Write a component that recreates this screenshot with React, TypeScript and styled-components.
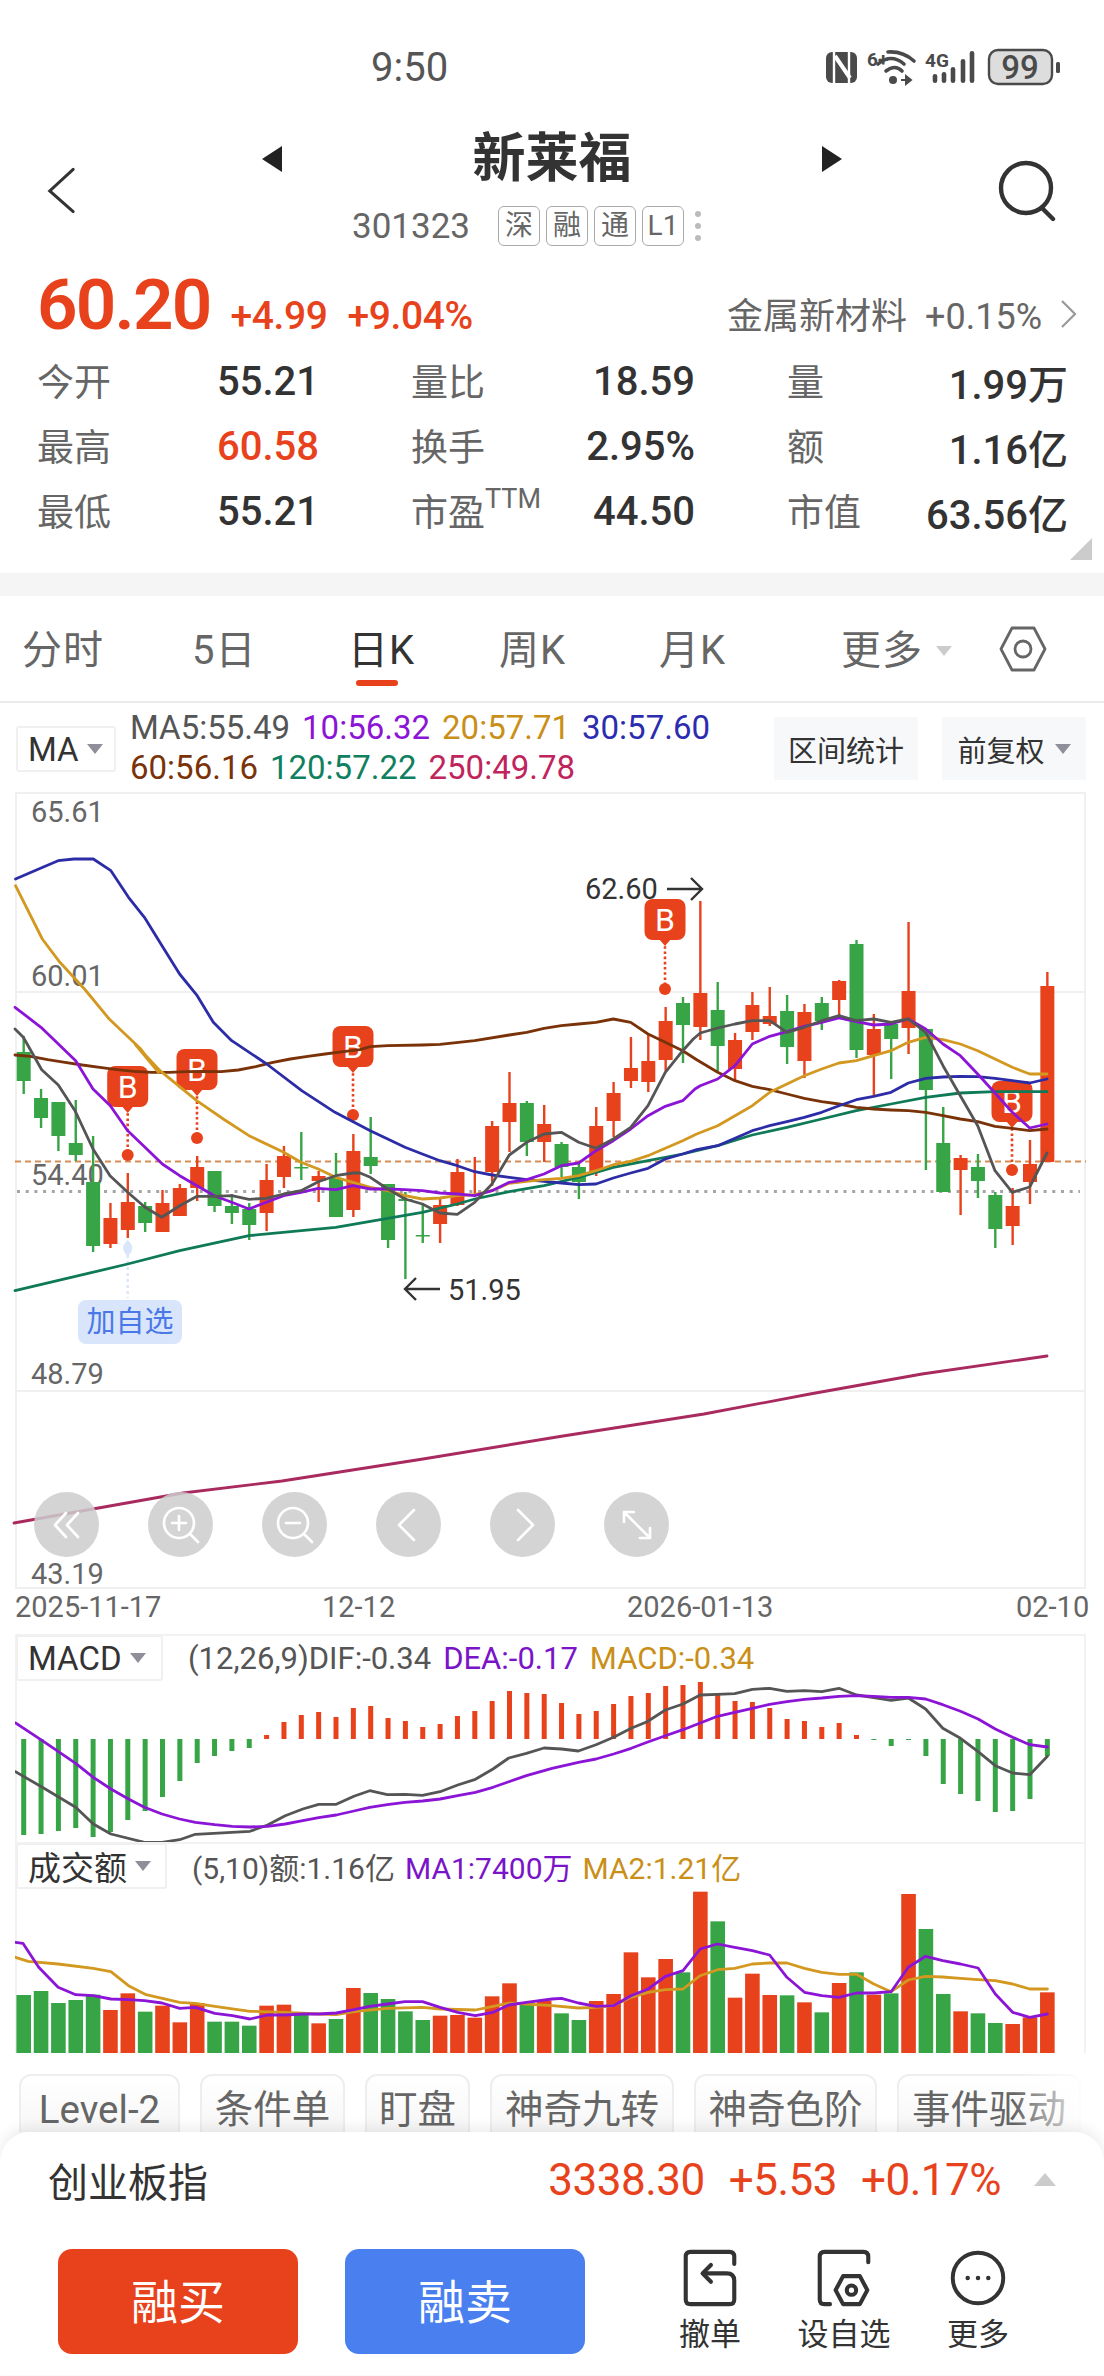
import styled, { createGlobalStyle } from "styled-components";

const RED = "#e8421c";
const GREEN = "#37a546";
const FONT = `Roboto, "Noto Sans CJK SC", sans-serif`;

const GlobalStyle = createGlobalStyle`
  html, body { margin: 0; padding: 0; background: #fff; }
  * { box-sizing: border-box; }
  body { font-family: ${FONT}; color: #333; overflow: hidden; }
`;

const Page = styled.div`
  width: 1104px;
  height: 2376px;
  overflow: hidden;
  background: #fff;
`;

/* ---------- top ---------- */
const StatusBar = styled.div`
  height: 126px;
  padding-top: 48px;
  display: flex;
  align-items: flex-start;
`;
const Clock = styled.div`
  width: 826px;
  padding-left: 371px;
  font-size: 40px;
  line-height: 40px;
  color: #555;
`;
const Nav = styled.div`
  height: 136px;
  display: grid;
  grid-template-columns: 260px 1fr 260px;
`;
const NavIcon = styled.div<{ $right?: boolean }>`
  display: flex;
  justify-content: ${(p) => (p.$right ? "flex-end" : "flex-start")};
  padding: ${(p) => (p.$right ? "34px 46px 0 0" : "39px 0 0 46px")};
`;
const NavCenter = styled.div`
  display: flex;
  flex-direction: column;
`;
const TitleRow = styled.div`
  height: 66px;
  display: flex;
  align-items: center;
  justify-content: space-between;
`;
const Title = styled.div`
  font-size: 53px;
  font-weight: 700;
  line-height: 66px;
  color: #333;
`;
const CodeRow = styled.div`
  margin-top: 14px;
  height: 40px;
  padding-left: 92px;
  display: flex;
  align-items: center;
`;
const Code = styled.div`
  width: 146px;
  font-size: 35px;
  color: #666;
`;
const Tag = styled.span`
  width: 42px;
  height: 40px;
  margin-right: 6px;
  border: 1.5px solid #aaa;
  border-radius: 6px;
  font-size: 28px;
  line-height: 37px;
  text-align: center;
  color: #666;
`;
const MoreDots = styled.span`
  margin-left: 5px;
  display: flex;
  flex-direction: column;
  gap: 6px;
  i {
    display: block;
    width: 6px;
    height: 6px;
    border-radius: 3px;
    background: #bbb;
  }
`;
const QuoteRow = styled.div`
  height: 86px;
  padding: 0 26px 0 37px;
  display: flex;
  align-items: baseline;
`;
const BigPrice = styled.div`
  font-size: 71px;
  font-weight: 600;
  line-height: 86px;
  letter-spacing: -1.8px;
  color: ${RED};
`;
const Change = styled.div`
  margin-left: 20px;
  font-size: 39px;
  font-weight: 500;
  letter-spacing: -0.4px;
  color: ${RED};
`;
const Sector = styled.div`
  margin-left: auto;
  display: flex;
  align-items: baseline;
  gap: 18px;
  font-size: 36px;
  color: #666;
`;
const StatGrid = styled.div`
  position: relative;
  height: 225px;
  padding-left: 37px;
  display: grid;
  grid-template-columns: 282px 284px 281px;
  grid-auto-rows: 65px;
  column-gap: 92px;
`;
const Stat = styled.div`
  display: flex;
  justify-content: space-between;
  align-items: center;
`;
const StatLabel = styled.span`
  margin-top: -2px;
  font-size: 37px;
  color: #666;
  sup {
    font-size: 27px;
    line-height: 0;
    vertical-align: 18px;
    font-family: ${FONT};
  }
`;
const StatValue = styled.span<{ $up?: boolean }>`
  margin-top: 2px;
  font-size: 40px;
  font-weight: 500;
  color: ${(p) => (p.$up ? RED : "#333")};
`;
const Corner = styled.div`
  position: absolute;
  right: 12px;
  bottom: 13px;
  width: 0;
  height: 0;
  border-left: 22px solid transparent;
  border-bottom: 22px solid #ccc;
`;
const Band = styled.div`
  height: 23px;
  background: #f5f5f5;
`;

/* ---------- tabs ---------- */
const Tabs = styled.div`
  height: 107px;
  padding: 0 0 0 22px;
  display: grid;
  grid-template-columns: 170px 156px 151px 160px 182px 158px 60px;
  align-items: center;
  border-bottom: 2px solid #ebebeb;
`;
const Tab = styled.div<{ $on?: boolean }>`
  position: relative;
  display: flex;
  align-items: center;
  gap: 13px;
  padding-top: 3px;
  font-size: 40px;
  letter-spacing: 1px;
  line-height: 100px;
  height: 106px;
  color: ${(p) => (p.$on ? "#333" : "#666")};
  ${(p) =>
    p.$on &&
    `&::after {
      content: "";
      position: absolute;
      left: 8px;
      bottom: 16px;
      width: 42px;
      height: 6px;
      border-radius: 3px;
      background: ${RED};
    }`}
`;
const Caret = styled.span<{ $tone?: string; $size?: number }>`
  display: inline-block;
  width: 0;
  height: 0;
  border-left: ${(p) => p.$size ?? 8}px solid transparent;
  border-right: ${(p) => p.$size ?? 8}px solid transparent;
  border-top: ${(p) => (p.$size ?? 8) + 2}px solid ${(p) => p.$tone ?? "#8f8f99"};
`;

/* ---------- chart header ---------- */
const Toolbar = styled.div`
  height: 89px;
  padding: 0 18px 0 16px;
  display: flex;
`;
const Select = styled.div<{ $w: number }>`
  width: ${(p) => p.$w}px;
  height: 46px;
  border: 2px solid #f0f0f0;
  border-radius: 3px;
  padding-left: 10px;
  display: flex;
  align-items: center;
  gap: 8px;
  font-size: 33px;
  color: #333;
  flex-shrink: 0;
`;
const MaSelect = styled(Select)`
  margin-top: 23px;
`;
const Legend = styled.div`
  margin: 5px 0 0 14px;
  font-size: 33px;
  line-height: 40px;
  white-space: nowrap;
`;
const LegendRow = styled.div`
  display: flex;
  gap: 12px;
`;
const Val = styled.span<{ $c: string }>`
  color: ${(p) => p.$c};
`;
const ToolBtn = styled.div<{ $first?: boolean }>`
  margin: 14px 0 0 ${(p) => (p.$first ? "auto" : "24px")};
  width: 144px;
  height: 63px;
  background: #f7f8fa;
  display: flex;
  align-items: center;
  justify-content: center;
  gap: 10px;
  font-size: 29px;
  color: #333;
`;

/* ---------- main chart ---------- */
const ChartFrame = styled.div`
  position: relative;
  margin-left: 15px;
  width: 1071px;
  height: 797px;
  border: 2px solid #f0f0f0;
`;
const FillSvg = styled.svg`
  position: absolute;
  left: -2px;
  top: -2px;
  overflow: visible;
`;
const AxisText = styled.text`
  font-family: ${FONT};
  font-size: 29px;
  fill: #666;
`;
const MarkText = styled.text`
  font-family: ${FONT};
  font-size: 29px;
  fill: #333;
`;
const BadgeText = styled.text`
  font-family: ${FONT};
  font-size: 32px;
  fill: #fff;
  text-anchor: middle;
`;
const AddWatch = styled.div`
  position: absolute;
  left: 61px;
  top: 506px;
  width: 104px;
  height: 44px;
  border-radius: 8px;
  background: #d9e5fb;
  color: #4a78e6;
  font-size: 29px;
  line-height: 44px;
  text-align: center;
`;
const Controls = styled.div`
  position: absolute;
  left: 17px;
  top: 698px;
  display: flex;
  gap: 49px;
`;
const Round = styled.div`
  width: 65px;
  height: 65px;
  border-radius: 50%;
  background: rgba(205, 205, 205, 0.85);
  display: flex;
  align-items: center;
  justify-content: center;
`;
const Dates = styled.div`
  height: 45px;
  padding-left: 15px;
  display: grid;
  grid-template-columns: 307px 305px 389px 80px;
  font-size: 29px;
  line-height: 36px;
  color: #666;
  white-space: nowrap;
`;

/* ---------- sub panels ---------- */
const Panel = styled.div<{ $h: number }>`
  margin-left: 15px;
  width: 1071px;
  height: ${(p) => p.$h}px;
  border: solid #f2f2f2;
  border-width: 2px 2px 0 2px;
  svg {
    display: block;
    margin-left: -2px;
  }
`;
const PanelHead = styled.div`
  height: 44px;
  display: flex;
  align-items: center;
  margin-left: -1px;
`;
const PanelLegend = styled.div<{ $left: number; $size: number; $gap: number }>`
  margin-left: ${(p) => p.$left}px;
  display: flex;
  gap: ${(p) => p.$gap}px;
  font-size: ${(p) => p.$size}px;
  white-space: nowrap;
  color: #555;
`;

/* ---------- chips ---------- */
const ChipRow = styled.div`
  margin-top: 21px;
  height: 58px;
  padding-left: 19px;
  display: flex;
  gap: 20px;
  overflow: hidden;
  position: relative;
  &::after {
    content: "";
    position: absolute;
    right: 0;
    top: 0;
    width: 90px;
    height: 100%;
    background: linear-gradient(to right, rgba(255, 255, 255, 0), #fff 90%);
  }
`;
const Chip = styled.div<{ $w: number }>`
  flex: 0 0 ${(p) => p.$w}px;
  height: 84px;
  border: 2px solid #eee;
  border-radius: 12px;
  background: linear-gradient(#fff, #f3f3f3);
  font-size: 38.5px;
  line-height: 68px;
  text-align: center;
  color: #666;
  white-space: nowrap;
`;

/* ---------- bottom sheet ---------- */
const Sheet = styled.div`
  position: relative;
  height: 243px;
  border-radius: 30px 30px 0 0;
  background: #fff;
  box-shadow: 0 -4px 14px rgba(0, 0, 0, 0.08);
`;
const IndexRow = styled.div`
  height: 117px;
  padding: 0 48px 22px 48px;
  display: flex;
  align-items: center;
`;
const IndexName = styled.div`
  font-size: 40px;
  color: #333;
`;
const IndexNums = styled.div`
  margin-left: auto;
  display: flex;
  gap: 24px;
  font-size: 44px;
  letter-spacing: -0.5px;
  color: ${RED};
`;
const UpCaret = styled.span`
  margin-left: 33px;
  width: 0;
  height: 0;
  border-left: 11px solid transparent;
  border-right: 11px solid transparent;
  border-bottom: 13px solid #ccc;
`;
const TradeRow = styled.div`
  padding-left: 58px;
  display: flex;
`;
const TradeBtn = styled.div<{ $c: string }>`
  width: 240px;
  height: 105px;
  margin-right: 47px;
  border-radius: 14px;
  background: ${(p) => p.$c};
  color: #fff;
  font-size: 47px;
  line-height: 107px;
  text-align: center;
`;
const Action = styled.div`
  width: 134px;
  display: flex;
  flex-direction: column;
  align-items: center;
  font-size: 31px;
  line-height: 40px;
  color: #333;
  svg {
    margin-bottom: 8px;
  }
`;
const Actions = styled.div`
  margin-left: 11px;
  display: flex;
`;

/* ---------- chart data, read off the picture in page pixels ---------- */
// wick top, body top, body bottom, wick bottom, red?
const candles: [number, number, number, number, number][] = [
  [1037, 1053, 1082, 1095, 0], [1090, 1099, 1119, 1129, 0], [1103, 1103, 1137, 1152, 0],
  [1101, 1144, 1156, 1162, 0], [1137, 1183, 1247, 1253, 0], [1204, 1219, 1245, 1249, 1],
  [1174, 1203, 1231, 1239, 1], [1203, 1207, 1224, 1233, 0], [1191, 1204, 1233, 1233, 1],
  [1185, 1189, 1217, 1217, 1], [1157, 1168, 1189, 1202, 1], [1172, 1172, 1207, 1213, 0],
  [1195, 1207, 1214, 1225, 0], [1204, 1210, 1226, 1241, 0], [1165, 1181, 1214, 1232, 1],
  [1147, 1157, 1178, 1189, 1], [1133, 1168, 1169, 1181, 0], [1172, 1177, 1182, 1203, 1],
  [1154, 1179, 1218, 1218, 0], [1135, 1152, 1211, 1218, 1], [1118, 1158, 1167, 1175, 0],
  [1185, 1185, 1241, 1249, 0], [1193, 1200, 1202, 1280, 0], [1204, 1236, 1237, 1244, 0],
  [1200, 1206, 1225, 1244, 1], [1160, 1173, 1206, 1207, 1], [1158, 1195, 1197, 1197, 1],
  [1122, 1127, 1173, 1187, 1], [1073, 1104, 1123, 1153, 1], [1102, 1104, 1143, 1157, 0],
  [1106, 1125, 1143, 1163, 1], [1143, 1145, 1168, 1178, 0], [1164, 1168, 1183, 1200, 0],
  [1108, 1127, 1173, 1177, 1], [1083, 1094, 1122, 1138, 1], [1038, 1069, 1082, 1089, 1],
  [1036, 1062, 1083, 1093, 1], [1008, 1022, 1061, 1072, 1], [998, 1004, 1026, 1064, 0],
  [902, 994, 1028, 1041, 1], [983, 1011, 1047, 1072, 0], [1034, 1041, 1070, 1082, 1],
  [993, 1006, 1033, 1041, 1], [988, 1017, 1025, 1027, 1], [996, 1012, 1048, 1065, 0],
  [1005, 1013, 1062, 1079, 1], [998, 1004, 1022, 1031, 0], [981, 982, 1001, 1018, 1],
  [941, 945, 1051, 1059, 0], [1015, 1030, 1056, 1097, 1], [1022, 1025, 1040, 1080, 0],
  [923, 992, 1029, 1055, 1], [1030, 1030, 1091, 1171, 0], [1108, 1144, 1193, 1193, 0],
  [1156, 1159, 1171, 1216, 1], [1155, 1168, 1182, 1199, 0], [1193, 1196, 1230, 1249, 0],
  [1189, 1207, 1227, 1246, 1], [1141, 1165, 1183, 1205, 1], [973, 987, 1163, 1163, 1],
];
const cx = (i: number) => 23.7 + i * 17.35;

// lines were measured on crops of the picture, each with its own origin
const crop = (ox: number, oy: number, sx: number, sy: number, raw: number[]) => {
  const out: string[] = [];
  for (let i = 0; i < raw.length; i += 2) out.push(`${(ox + raw[i] / sx).toFixed(1)},${(oy + raw[i + 1] / sy).toFixed(1)}`);
  return out;
};
const A = (raw: number[]) => crop(10, 1000, 3, 3, raw);
const B = (raw: number[]) => crop(350, 1000, 3, 3, raw);
const C = (raw: number[]) => crop(690, 950, 3, 3, raw);
const D = (raw: number[]) => crop(0, 600, 2.84, 3, raw);
const E = (raw: number[]) => crop(0, 1600, 2.84, 3, raw);
const F = (raw: number[]) => crop(552, 1600, 2.84, 3, raw);

const ma5 = [
  ...A([15,90,40,115,95,212,145,258,195,335,249,450,300,530,353,580,405,625,455,655,509,620,561,592,613,592,665,590,717,601,769,598,821,585,873,575,925,548,977,530,1029,522]),
  ...B([30,522,61,535,113,570,165,600,217,615,270,642,322,646,374,610,426,555,478,468,530,430,582,405,634,400,686,430,738,448,790,420,842,385,894,320,946,220,998,155,1030,120]),
  ...C([31,252,83,237,135,225,187,215,239,215,291,250,343,235,395,215,447,200,499,215,551,210,603,220,655,210,707,250,759,350,811,440,863,530,915,665,967,730,1019,714,1071,612]),
];
const ma10 = [
  ...A([15,25,93,85,197,185,249,270,301,320,353,395,405,445,457,495,509,530,561,560,613,590,665,610,717,630,769,610,821,590,873,580,925,568,977,572,1029,560]),
  ...B([61,570,113,570,165,572,217,575,270,582,322,585,374,590,426,575,478,550,530,542,582,525,634,500,686,492,738,455,790,425,842,390,894,350,946,322,998,305,1035,270]),
  ...C([31,410,83,390,135,350,187,285,239,262,291,248,343,232,395,220,447,207,499,218,551,228,603,225,655,210,707,240,759,285,811,320,863,375,915,432,967,490,1019,537,1071,525]),
];
const ma20 = [
  ...D([44,860,120,1020,170,1090,240,1170,310,1260,400,1350,450,1420]),
  ...A([375,135,450,215,560,305,640,360,717,410,821,460,873,490,925,510,977,535,1029,550]),
  ...B([61,565,113,575,165,590,217,600,270,597,322,590,374,587,426,575,478,553,530,547,582,542,634,538,686,530,738,515,790,497,842,487,894,470,946,448,998,425,1040,405]),
  ...C([83,530,135,500,187,470,239,430,291,405,343,380,395,360,447,342,499,335,551,320,603,305,655,280,707,265,759,272,811,285,863,305,915,330,967,355,1019,375,1071,375]),
];
const ma30 = [
  ...D([44,840,110,810,165,785,210,780,265,780,315,815,365,895,410,955,460,1040,510,1125,560,1190]),
  ...A([610,70,665,125,770,195,875,275,975,340]),
  ...B([61,395,113,420,165,445,217,465,270,485,322,500,374,518,426,528,478,535,530,542,582,547,634,552,686,557,738,555,790,537,842,522,894,508,946,480,998,465,1040,452]),
  ...C([83,590,135,568,187,545,239,530,291,518,343,505,395,490,447,470,499,452,551,442,603,430,655,402,707,388,759,384,811,382,863,383,915,388,967,395,1019,402,1071,390]),
];
const ma60 = [
  ...A([15,168,61,172,113,182,165,190,217,198,269,205,321,212,373,217,425,220,477,220,529,218,581,217,633,218,685,213,737,203,789,190,841,180,893,172,945,165,1000,158,1050,152]),
  ...B([61,143,113,140,217,138,270,136,374,125,478,108,530,100,582,88,634,80,686,75,738,70,790,60,842,70,894,105,946,130,998,155,1040,182]),
  ...C([83,370,135,395,187,412,239,422,291,435,343,448,395,458,447,465,499,475,551,480,603,483,655,485,707,490,759,500,811,510,863,518,915,532,967,538,1019,545,1071,540]),
];
const ma120 = [
  ...A([15,875,353,795,509,755,717,710,977,685]),
  ...B([113,658,217,640,322,615,374,600,478,578,582,560,686,535,790,505,894,485,998,465,1040,455]),
  ...C([83,590,187,558,291,535,395,510,499,485,603,465,707,445,811,432,915,428,1071,428]),
];
const ma250 = "14,1524 183,1494 282,1482 423,1460 563,1437 704,1415 810,1395 922,1375 1047,1357";

const macd = [
  -96,-95,-92,-89,-98,-93,-81,-72,-58,-42,-24,-17,-12,-9,
  4,17,24,27,22,31,33,21,18,12,15,23,28,38,48,46,45,36,25,28,35,43,46,53,54,57,46,38,37,31,20,18,12,16,4,
  -1,-7,-1,-17,-45,-55,-62,-73,-72,-60,-17,
];
const dif = [
  ...E([44,518,120,565,215,625,265,675,315,705,410,730,460,730,510,722,555,706,710,697,760,678,810,650,860,630,905,616,955,616,1005,592,1050,575,1100,587,1150,586,1200,589,1250,578,1300,558,1350,541,1400,510,1445,477,1495,463,1545,447]),
  ...F([27,450,75,456,125,437,175,415,225,388,270,368,322,333,372,315,421,288,470,286,519,284,569,271,618,268,667,277,717,275,766,278,815,268,865,288,914,296,963,304,1012,297,1061,330,1110,388,1160,418,1210,458,1259,500,1308,522,1357,527,1407,472]),
];
const dea = [
  ...E([44,372,120,425,215,493,265,535,315,570,365,600,410,625,460,645,510,660,555,670,610,677,660,682,710,684,760,682,810,675,860,665,905,656,955,648,1005,636,1050,625,1100,617,1150,610,1200,606,1250,600,1300,590,1350,580,1400,565,1445,548,1495,530]),
  ...F([0,508,75,490,125,480,175,465,225,448,270,430,322,410,372,392,421,372,470,352,519,340,569,328,618,316,667,308,717,301,766,297,815,292,865,290,914,292,963,295,1012,295,1061,300,1110,317,1160,337,1210,360,1259,390,1308,415,1357,437,1407,444]),
];
// crop value of each bar's top, baseline is 1362
const volume: [number, string][] = [
  [1188,"g"],[1176,"g"],[1212,"g"],[1203,"g"],[1187,"g"],[1233,"r"],[1183,"r"],[1238,"g"],[1220,"r"],[1270,"r"],
  [1212,"r"],[1268,"g"],[1268,"g"],[1280,"g"],[1220,"r"],[1217,"r"],[1243,"g"],[1273,"r"],[1260,"g"],[1167,"r"],
  [1182,"g"],[1200,"g"],[1237,"g"],[1263,"g"],[1250,"r"],[1248,"r"],[1256,"r"],[1192,"r"],[1153,"r"],[1210,"g"],
  [1205,"r"],[1243,"g"],[1263,"g"],[1206,"r"],[1185,"r"],[1060,"r"],[1135,"r"],[1080,"r"],[1120,"g"],[878,"r"],
  [967,"g"],[1196,"r"],[1124,"r"],[1188,"r"],[1189,"g"],[1210,"r"],[1240,"g"],[1152,"r"],[1120,"g"],[1187,"r"],
  [1183,"g"],[885,"r"],[990,"g"],[1185,"g"],[1237,"r"],[1243,"g"],[1272,"g"],[1275,"r"],[1255,"r"],[1180,"r"],
];
const volMa1 = [
  ...E([44,1030,65,1033,110,1105,165,1165,215,1187,265,1190,315,1200,365,1202,410,1205,460,1212,510,1228,555,1225,610,1243,660,1250,710,1260,760,1248,810,1248,860,1245,905,1245,955,1242,1005,1232,1050,1222,1100,1215,1150,1208,1200,1208,1250,1225,1300,1240,1350,1250,1400,1240,1445,1218,1495,1210]),
  ...F([0,1200,27,1198,75,1212,125,1222,175,1220,224,1190,273,1170,322,1132,372,1115,421,1050,470,1035,519,1045,569,1055,618,1068,667,1135,717,1180,766,1190,815,1195,865,1182,914,1182,963,1178,1012,1105,1061,1072,1110,1085,1160,1095,1210,1107,1259,1185,1308,1240,1357,1255,1407,1245]),
];
const volMa2 = [
  ...E([44,1075,80,1087,165,1095,265,1108,315,1118,365,1160,415,1187,510,1210,555,1213,610,1222,710,1237,810,1240,905,1245,955,1247,1005,1238,1100,1228,1200,1225,1250,1230,1350,1233,1400,1222,1445,1212]),
  ...F([0,1220,75,1227,125,1225,175,1220,224,1195,273,1180,322,1172,372,1170,421,1130,470,1112,519,1108,569,1095,618,1092,667,1092,717,1108,766,1120,815,1126,865,1126,914,1155,963,1178,1012,1143,1061,1132,1110,1134,1160,1138,1210,1142,1259,1145,1308,1155,1357,1170,1407,1170]),
];

const badges = [
  { x: 127.7, top: 1067, dot: 1156 },
  { x: 197, top: 1050, dot: 1139 },
  { x: 353, top: 1027, dot: 1116 },
  { x: 665, top: 900, dot: 990 },
  { x: 1012, top: 1082, dot: 1171 },
];

const stats = [
  ["今开", "55.21"], ["量比", "18.59"], ["量", "1.99万"],
  ["最高", "60.58", "up"], ["换手", "2.95%"], ["额", "1.16亿"],
  ["最低", "55.21"], ["市盈", "44.50"], ["市值", "63.56亿"],
];

const Line = ({ points, color, w = 2.8 }: { points: string[] | string; color: string; w?: number }) => (
  <polyline
    points={Array.isArray(points) ? points.join(" ") : points}
    fill="none"
    stroke={color}
    strokeWidth={w}
    strokeLinejoin="round"
    strokeLinecap="round"
  />
);

function StatusIcons() {
  return (
    <svg width="240" height="40" viewBox="826 48 240 40">
      <rect x="826" y="52" width="31" height="31" rx="6" fill="#4a4a4a" />
      <path d="M834 52v31M849 52v31" stroke="#fff" strokeWidth="2.4" />
      <path d="M835 56l15 22" stroke="#fff" strokeWidth="4" />
      <text x="867" y="66" fontSize="19" fontWeight="700" fill="#4a4a4a" fontFamily={FONT}>6+</text>
      <path d="M888 52q15-1 26 9M878 64q13-11 26 0M886 71q9-7 16 0" fill="none" stroke="#4a4a4a" strokeWidth="3.6" strokeLinecap="round" />
      <circle cx="893" cy="80" r="4" fill="#4a4a4a" />
      <path d="M901 80h7M906 76v8l5-4z" stroke="#4a4a4a" strokeWidth="2" fill="#4a4a4a" />
      <text x="925" y="67" fontSize="19" fontWeight="700" fill="#4a4a4a" fontFamily={FONT}>4G</text>
      {[[935, 74], [944, 72], [953, 67], [963, 59], [972, 51]].map(([x, t]) => (
        <rect key={x} x={x - 2.3} y={t} width="4.6" height={83 - t} rx="2.3" fill="#4a4a4a" />
      ))}
      <rect x="989" y="50" width="63" height="34" rx="9" fill="#ddd" stroke="#4a4a4a" strokeWidth="2.4" />
      <text x="1020" y="79" textAnchor="middle" fontSize="33" fontWeight="500" fill="#4a4a4a" fontFamily={FONT}>99</text>
      <rect x="1056" y="62" width="4" height="11" rx="1.5" fill="#4a4a4a" />
    </svg>
  );
}

function ControlIcon({ d, circle }: { d: string; circle?: boolean }) {
  return (
    <svg width="46" height="46" viewBox="0 0 46 46" fill="none" stroke="#fff" strokeWidth="2.6" strokeLinecap="round" strokeLinejoin="round">
      {circle && <circle cx="21" cy="21" r="15" />}
      <path d={d} />
    </svg>
  );
}

function MainChart() {
  return (
    <ChartFrame>
      <FillSvg width="1071" height="797" viewBox="15 793 1071 797">
        <line x1="15" x2="1086" y1="993" y2="993" stroke="#f0f0f0" strokeWidth="2" />
        <line x1="15" x2="1086" y1="1392" y2="1392" stroke="#f0f0f0" strokeWidth="2" />
        <AxisText x="31" y="823">65.61</AxisText>
        <AxisText x="31" y="987">60.01</AxisText>
        <AxisText x="31" y="1186">54.40</AxisText>
        <AxisText x="31" y="1385">48.79</AxisText>
        <AxisText x="31" y="1585">43.19</AxisText>
        <line x1="15" x2="1086" y1="1162.5" y2="1162.5" stroke="#d58d57" strokeWidth="2" strokeDasharray="6 4" />
        <line x1="17" x2="1080" y1="1192.5" y2="1192.5" stroke="#a5a5a5" strokeWidth="3" strokeDasharray="3 5.7" />

        {/* reminder marks */}
        {badges.map((b) => (
          <g key={b.x}>
            <line x1={b.x} x2={b.x} y1={b.top + 42} y2={b.dot} stroke={RED} strokeWidth="2.6" strokeDasharray="2.6 2.6" />
            <circle cx={b.x} cy={b.dot} r="6" fill={RED} />
            <rect x={b.x - 20.5} y={b.top} width="41" height="41" rx="8" fill={RED} />
            <path d={`M${b.x - 6} ${b.top + 40}L${b.x} ${b.top + 47}L${b.x + 6} ${b.top + 40}z`} fill={RED} />
            <BadgeText x={b.x} y={b.top + 32}>B</BadgeText>
          </g>
        ))}
        <path d="M127.7 1243q6 6 0 12q-6-6 0-12z" fill="#d9e5fb" stroke="#d9e5fb" strokeWidth="3" />
        <line x1="127.7" x2="127.7" y1="1256" y2="1299" stroke="#d9e5fb" strokeWidth="2.4" strokeDasharray="3 3" />

        {candles.map(([hi, top, bot, lo, up], i) => {
          const color = up ? RED : GREEN;
          return (
            <g key={i} fill={color}>
              <rect x={cx(i) - 1.2} y={hi} width="2.4" height={lo - hi} />
              <rect x={cx(i) - 7} y={top} width="14" height={Math.max(bot - top, 1.5)} />
            </g>
          );
        })}

        <Line points={ma250} color="#a92a5e" />
        <Line points={ma120} color="#0f7a58" />
        <Line points={ma60} color="#7a3209" />
        <Line points={ma30} color="#2c2ca6" />
        <Line points={ma20} color="#d3981f" />
        <Line points={ma10} color="#8b14d6" />
        <Line points={ma5} color="#555" />

        <MarkText x="585" y="900">62.60</MarkText>
        <path d="M667 890h35M691 879l11 11-11 11" fill="none" stroke="#333" strokeWidth="2.4" />
        <MarkText x="448" y="1301">51.95</MarkText>
        <path d="M440 1290h-35M416 1279l-11 11 11 11" fill="none" stroke="#333" strokeWidth="2.4" />
      </FillSvg>
      <AddWatch>加自选</AddWatch>
      <Controls>
        <Round><ControlIcon d="M22 11L11 23l11 12M34 11L23 23l11 12" /></Round>
        <Round><ControlIcon circle d="M32 32l8 8M21 14v14M14 21h14" /></Round>
        <Round><ControlIcon circle d="M32 32l8 8M14 21h14" /></Round>
        <Round><ControlIcon d="M28 8L13 23l15 15" /></Round>
        <Round><ControlIcon d="M18 8l15 15-15 15" /></Round>
        <Round><ControlIcon d="M10 10l26 26M10 10v10M10 10h10M36 36v-10M36 36h-10" /></Round>
      </Controls>
    </ChartFrame>
  );
}

function MacdPanel() {
  return (
    <Panel $h={208}>
      <PanelHead>
        <Select $w={147}>MACD <Caret /></Select>
        <PanelLegend $left={25} $size={31} $gap={12}>
          <span>(12,26,9)DIF:-0.34</span>
          <Val $c="#7a14c8">DEA:-0.17</Val>
          <Val $c="#c98f18">MACD:-0.34</Val>
        </PanelLegend>
      </PanelHead>
      <svg width="1071" height="162" viewBox="15 1681 1071 162">
        {macd.map((v, i) => (
          <rect key={i} x={cx(i) - 2.5} y={v > 0 ? 1740 - v : 1740} width="5" height={Math.abs(v)} fill={v > 0 ? RED : GREEN} />
        ))}
        <Line points={dif} color="#555" />
        <Line points={dea} color="#8b14d6" />
      </svg>
    </Panel>
  );
}

function VolumePanel() {
  return (
    <Panel $h={211}>
      <PanelHead>
        <Select $w={151}>成交额 <Caret /></Select>
        <PanelLegend $left={25} $size={30} $gap={10}>
          <span>(5,10)额:1.16亿</span>
          <Val $c="#7a14c8">MA1:7400万</Val>
          <Val $c="#c98f18">MA2:1.21亿</Val>
        </PanelLegend>
      </PanelHead>
      <svg width="1071" height="165" viewBox="15 1889 1071 165">
        {volume.map(([z, c], i) => (
          <rect key={i} x={cx(i) - 7.3} y={1600 + z / 3} width="14.6" height={(1362 - z) / 3} fill={c === "r" ? RED : GREEN} />
        ))}
        <Line points={volMa2} color="#d3981f" />
        <Line points={volMa1} color="#8b14d6" />
      </svg>
    </Panel>
  );
}

export default function App() {
  return (
    <Page>
      <GlobalStyle />
      <StatusBar>
        <Clock>9:50</Clock>
        <StatusIcons />
      </StatusBar>

      <Nav>
        <NavIcon>
          <svg width="30" height="50" viewBox="0 0 32 50" fill="none" stroke="#333" strokeWidth="3.2" strokeLinecap="round">
            <path d="M29 3L4 26l25 22" />
          </svg>
        </NavIcon>
        <NavCenter>
          <TitleRow>
            <svg width="22" height="26" viewBox="0 0 22 26"><path d="M22 0v26L2 13z" fill="#222" /></svg>
            <Title>新莱福</Title>
            <svg width="22" height="26" viewBox="0 0 22 26"><path d="M0 0v26l20-13z" fill="#222" /></svg>
          </TitleRow>
          <CodeRow>
            <Code>301323</Code>
            <Tag>深</Tag>
            <Tag>融</Tag>
            <Tag>通</Tag>
            <Tag>L1</Tag>
            <MoreDots><i /><i /><i /></MoreDots>
          </CodeRow>
        </NavCenter>
        <NavIcon $right>
          <svg width="62" height="62" viewBox="0 0 62 62" fill="none" stroke="#333" strokeWidth="4.4" strokeLinecap="round">
            <circle cx="30" cy="28" r="25" />
            <path d="M46 48l11 11" />
          </svg>
        </NavIcon>
      </Nav>

      <QuoteRow>
        <BigPrice>60.20</BigPrice>
        <Change>+4.99</Change>
        <Change>+9.04%</Change>
        <Sector>
          <span>金属新材料</span>
          <span>+0.15%</span>
          <svg width="18" height="30" viewBox="0 0 18 30" fill="none" stroke="#999" strokeWidth="2.2"><path d="M2 2l13 13L2 28" /></svg>
        </Sector>
      </QuoteRow>

      <StatGrid>
        {stats.map(([label, value, up]) => (
          <Stat key={label}>
            <StatLabel>
              {label}
              {label === "市盈" && <sup>TTM</sup>}
            </StatLabel>
            <StatValue $up={!!up}>{value}</StatValue>
          </Stat>
        ))}
        <Corner />
      </StatGrid>
      <Band />

      <Tabs>
        <Tab>分时</Tab>
        <Tab>5日</Tab>
        <Tab $on>日K</Tab>
        <Tab>周K</Tab>
        <Tab>月K</Tab>
        <Tab>更多 <Caret $tone="#ccc" /></Tab>
        <svg width="48" height="46" viewBox="0 0 48 46" fill="none" stroke="#666" strokeWidth="2.8" strokeLinejoin="round">
          <path d="M13 2h22l11 21-11 21H13L2 23z" />
          <circle cx="24" cy="23" r="8" />
        </svg>
      </Tabs>

      <Toolbar>
        <MaSelect $w={100}>MA <Caret /></MaSelect>
        <Legend>
          <LegendRow>
            <Val $c="#555">MA5:55.49</Val>
            <Val $c="#8b14d6">10:56.32</Val>
            <Val $c="#c98f18">20:57.71</Val>
            <Val $c="#2c2cb0">30:57.60</Val>
          </LegendRow>
          <LegendRow>
            <Val $c="#7a3209">60:56.16</Val>
            <Val $c="#0f8060">120:57.22</Val>
            <Val $c="#c0245c">250:49.78</Val>
          </LegendRow>
        </Legend>
        <ToolBtn $first>区间统计</ToolBtn>
        <ToolBtn>前复权 <Caret /></ToolBtn>
      </Toolbar>

      <MainChart />
      <Dates>
        <span>2025-11-17</span>
        <span>12-12</span>
        <span>2026-01-13</span>
        <span>02-10</span>
      </Dates>

      <MacdPanel />
      <VolumePanel />

      <ChipRow>
        <Chip $w={161}>Level-2</Chip>
        <Chip $w={145}>条件单</Chip>
        <Chip $w={105}>盯盘</Chip>
        <Chip $w={184}>神奇九转</Chip>
        <Chip $w={183}>神奇色阶</Chip>
        <Chip $w={184}>事件驱动</Chip>
      </ChipRow>

      <Sheet>
        <IndexRow>
          <IndexName>创业板指</IndexName>
          <IndexNums>
            <span>3338.30</span>
            <span>+5.53</span>
            <span>+0.17%</span>
          </IndexNums>
          <UpCaret />
        </IndexRow>
        <TradeRow>
          <TradeBtn $c={RED}>融买</TradeBtn>
          <TradeBtn $c="#4a7ff0">融卖</TradeBtn>
          <Actions>
            <Action>
              <svg width="56" height="58" viewBox="0 0 60 62" fill="none" stroke="#333" strokeWidth="4.4" strokeLinecap="round" strokeLinejoin="round">
                <path d="M56 16V8q0-5-5-5H9Q4 3 4 8v46q0 5 5 5h42q5 0 5-5V34q0-8-8-8H23" />
                <path d="M31 17l-9 9 9 9" />
              </svg>
              撤单
            </Action>
            <Action>
              <svg width="56" height="58" viewBox="0 0 60 62" fill="none" stroke="#333" strokeWidth="4.4" strokeLinecap="round" strokeLinejoin="round">
                <path d="M56 14V8q0-5-5-5H9Q4 3 4 8v46q0 5 5 5h6" />
                <path d="M29 29h18l8 15-8 15H29l-8-15z" />
                <circle cx="38" cy="44" r="5" />
              </svg>
              设自选
            </Action>
            <Action>
              <svg width="60" height="58" viewBox="0 0 60 62" fill="none" stroke="#333" strokeWidth="4.2">
                <circle cx="30" cy="31" r="27" />
                <circle cx="19" cy="31" r="2.4" fill="#333" stroke="none" />
                <circle cx="30" cy="31" r="2.4" fill="#333" stroke="none" />
                <circle cx="41" cy="31" r="2.4" fill="#333" stroke="none" />
              </svg>
              更多
            </Action>
          </Actions>
        </TradeRow>
      </Sheet>
    </Page>
  );
}
